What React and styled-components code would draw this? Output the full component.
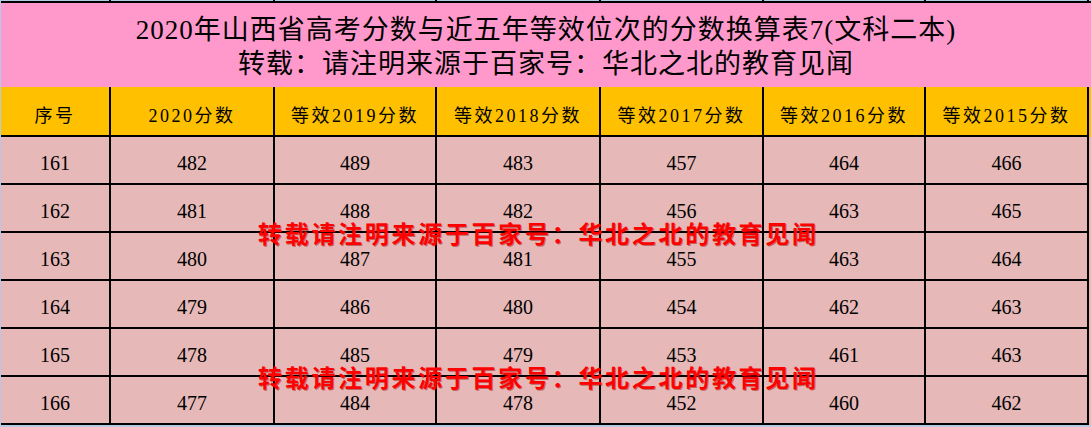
import styled, { createGlobalStyle } from 'styled-components';

const GlobalStyle = createGlobalStyle`
  html, body {
    margin: 0;
    padding: 0;
    background: #b4cbe3;
  }
  body {
    font-family: "Liberation Serif", "Noto Sans CJK SC", serif;
  }
`;

const COLS = '110px 164px 162px 164px 163px 162px 163px';

const headers = ['序号', '2020分数', '等效2019分数', '等效2018分数', '等效2017分数', '等效2016分数', '等效2015分数'];

const rows = [
  [161, 482, 489, 483, 457, 464, 466],
  [162, 481, 488, 482, 456, 463, 465],
  [163, 480, 487, 481, 455, 463, 464],
  [164, 479, 486, 480, 454, 462, 463],
  [165, 478, 485, 479, 453, 461, 463],
  [166, 477, 484, 478, 452, 460, 462],
];

const WATERMARK = '转载请注明来源于百家号：华北之北的教育见闻';

const Sheet = styled.div`
  position: relative;
  width: 1090px;
  margin-left: 1px;
`;

const PrevRow = styled.div`
  display: grid;
  grid-template-columns: ${COLS};
  height: 1px;
  & > div {
    border-right: 2px solid #000;
  }
`;

const TitleBlock = styled.div`
  background: #ff99cc;
  border-top: 2px solid #000;
  height: 86px;
  box-sizing: border-box;
  padding-top: 10px;
  text-align: center;
  color: #000;
  font-family: "Liberation Serif", "Noto Sans CJK SC", serif;
  font-size: 27px;
  letter-spacing: 1px;
`;

const TitleLine = styled.div`
  line-height: 34px;
  white-space: nowrap;
`;

const Row = styled.div`
  display: grid;
  grid-template-columns: ${COLS};
  background: ${(p) => (p.$head ? '#ffc000' : '#e6b8b7')};
`;

const Cell = styled.div`
  box-sizing: border-box;
  height: ${(p) => (p.$head ? '50px' : '48px')};
  border-right: 2px solid #000;
  border-bottom: 2px solid #000;
  display: flex;
  align-items: center;
  justify-content: center;
  color: #000;
  white-space: nowrap;
  font-family: "Liberation Serif", "Noto Sans CJK SC", serif;
  font-size: ${(p) => (p.$head ? '18px' : '20px')};
  letter-spacing: ${(p) => (p.$head ? '2.5px' : '0')};
  padding-top: ${(p) => (p.$head ? '5px' : '6px')};
`;

const Watermark = styled.div`
  position: absolute;
  left: 257px;
  top: ${(p) => p.$top}px;
  font-family: "Noto Sans CJK SC", "Liberation Serif", sans-serif;
  font-weight: 700;
  font-size: 24px;
  line-height: 25px;
  letter-spacing: 2.7px;
  color: #ff0000;
  text-shadow: 1px 1px 0 rgba(140, 0, 0, 0.45);
  white-space: nowrap;
  pointer-events: none;
`;

export default function App() {
  return (
    <>
      <GlobalStyle />
      <Sheet>
        <PrevRow>
          {headers.map((h) => (
            <div key={h} />
          ))}
        </PrevRow>
        <TitleBlock>
          <TitleLine>2020年山西省高考分数与近五年等效位次的分数换算表7(文科二本)</TitleLine>
          <TitleLine>转载：请注明来源于百家号：华北之北的教育见闻</TitleLine>
        </TitleBlock>
        <Row $head>
          {headers.map((h) => (
            <Cell key={h} $head>
              {h}
            </Cell>
          ))}
        </Row>
        {rows.map((r) => (
          <Row key={r[0]}>
            {r.map((v, i) => (
              <Cell key={i}>{v}</Cell>
            ))}
          </Row>
        ))}
        <Watermark $top={220}>{WATERMARK}</Watermark>
        <Watermark $top={364}>{WATERMARK}</Watermark>
      </Sheet>
    </>
  );
}
